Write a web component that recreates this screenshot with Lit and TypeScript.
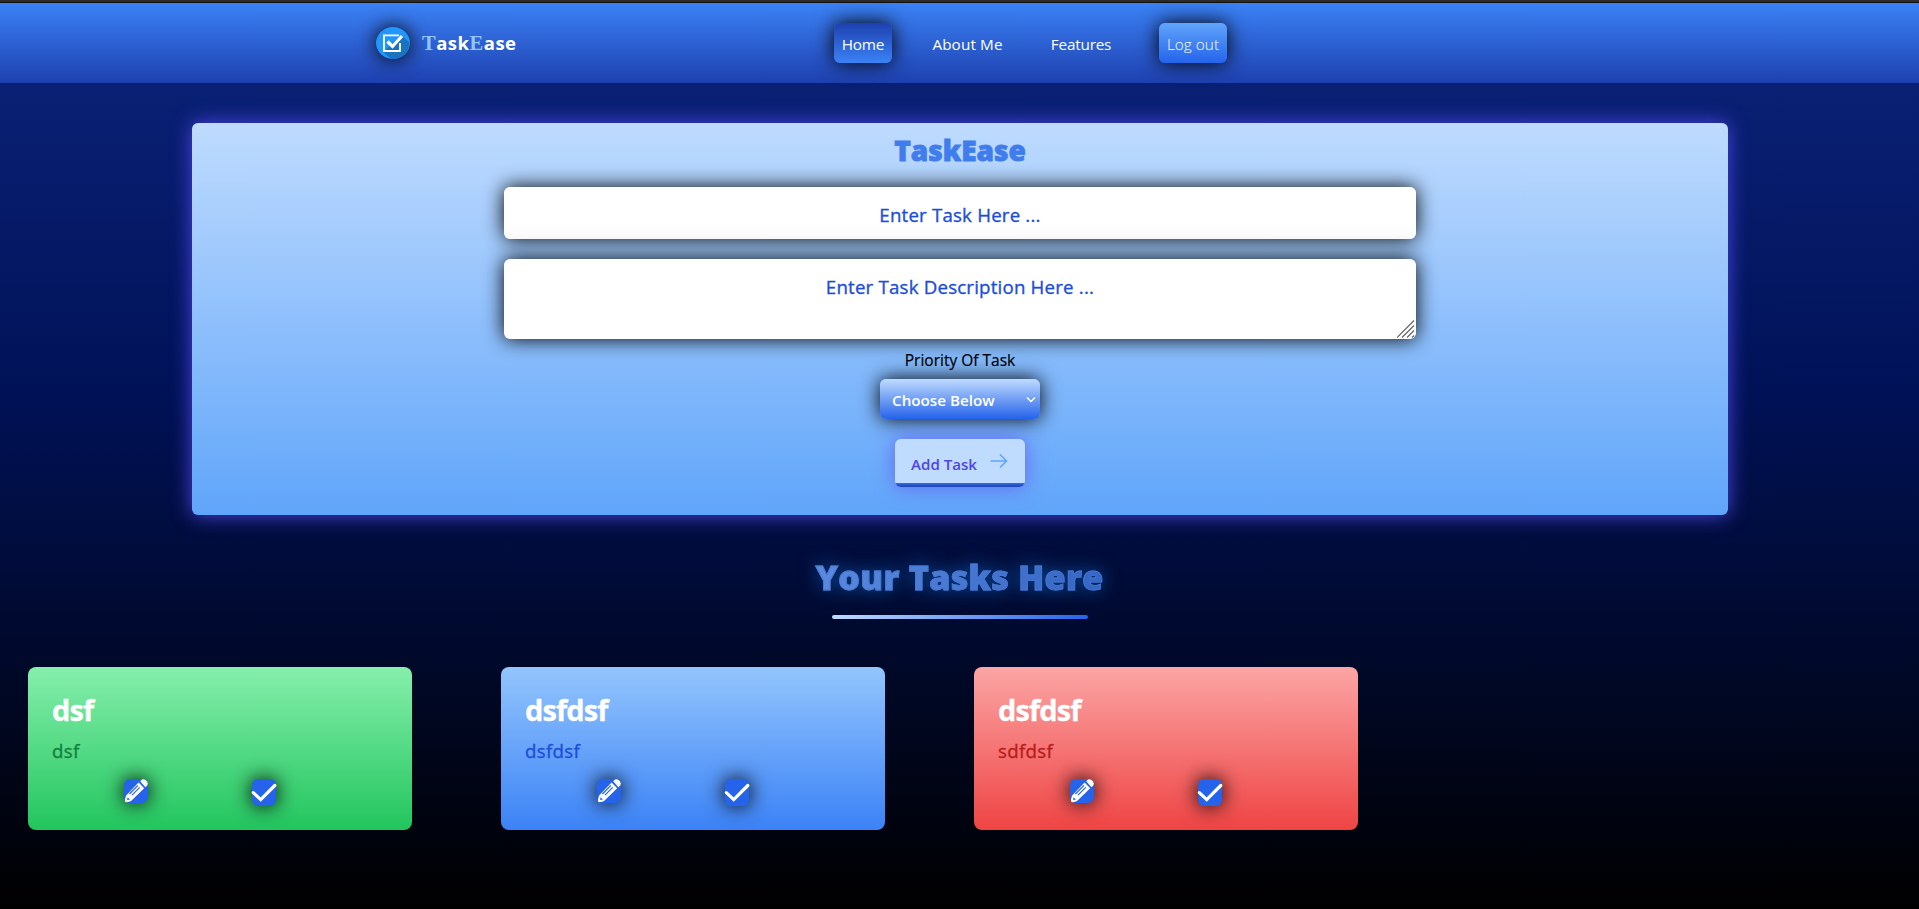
import { LitElement, html, css } from "lit";
import { customElement, property } from "lit/decorators.js";

interface Task {
  title: string;
  text: string;
  tone: "low" | "medium" | "high";
}

const TASKS: Task[] = [
  { title: "dsf", text: "dsf", tone: "low" },
  { title: "dsfdsf", text: "dsfdsf", tone: "medium" },
  { title: "dsfdsf", text: "sdfdsf", tone: "high" },
];

@customElement("task-card")
class TaskCard extends LitElement {
  @property({ attribute: false }) task!: Task;

  static styles = css`
    :host { display: block; width: 384px; height: 163px; }
    .card {
      box-sizing: border-box; height: 100%; border-radius: 8px; padding: 24px;
      display: flex; flex-direction: column;
    }
    .low { background: linear-gradient(#86efac, #22c55e); --ink: #15803d; }
    .medium { background: linear-gradient(#93c5fd, #3b82f6); --ink: #1d4ed8; }
    .high { background: linear-gradient(#fca5a5, #ef4444); --ink: #b91c1c; }
    .title {
      margin: 0; font-size: 29px; line-height: 38px; font-weight: 700;
      color: #fff; letter-spacing: -0.9px; -webkit-text-stroke: 0.3px #fff;
    }
    .text {
      margin: 8px 0 0; font-size: 18.7px; line-height: 28px; font-weight: 500;
      color: var(--ink); letter-spacing: 0.3px; -webkit-text-stroke: 0.35px var(--ink);
    }
    .actions { display: flex; gap: 104px; padding-left: 72px; margin-top: 14px; align-items: flex-start; }
    .icon { display: block; width: 24px; background: #2563eb; border-radius: 6px; box-shadow: 0 0 20px #000; color: #fff; overflow: visible; }
    .pencil { height: 24px; }
    .check { height: 27px; }
  `;

  render() {
    const t = this.task;
    return html`
      <article class="card ${t.tone}">
        <h2 class="title">${t.title}</h2>
        <p class="text">${t.text}</p>
        <div class="actions">
          <svg class="icon pencil" viewBox="0 0 24 24">
            <path fill="#fff" d="M16.2 2.2 18 .6Q19.8-.5 21.8 1.3L23 2.6Q24.6 4.6 23.2 6.5L21.4 8.2Z" />
            <path fill="#fff" d="M14.6 3.6 20.2 9.2 7.3 21.8Q6.7 22.4 5.8 22.6L2.7 23.3Q.4 23.4.9 21L1.7 17.7Q1.9 16.7 2.6 16Z" />
            <path fill="#2563eb" d="M3.6 18.2 6 20.4 3.100 20.900Z" />
            <path fill="none" stroke="#2563eb" stroke-width="1.200" d="M14 6.300 5.400 15M15.700 8.300 8 16.100" />
          </svg>
          <svg class="icon check" viewBox="0 0 24 27">
            <path fill="none" stroke="#fff" stroke-width="3.200" stroke-linecap="round" d="M1.300 13.600 8.700 20.600 22.800 6.500" />
          </svg>
        </div>
      </article>
    `;
  }
}

@customElement("app-root")
class AppRoot extends LitElement {
  static styles = css`
    :host {
      display: flex; flex-direction: column; height: 909px; box-sizing: border-box; overflow: hidden;
      font-family: "Open Sans", "Noto Sans", sans-serif;
      background: linear-gradient(#0c247c, #001258 42%, #000);
    }
    .strip { flex: none; height: 2px; background: #2b2b2b; border-bottom: 1px solid #111; }
    .nav {
      flex: none; height: 80px; box-sizing: border-box; display: flex; align-items: flex-start;
      padding: 20px 0 0 376px; background: linear-gradient(#3b82f6, #1e40af); color: #fff;
    }
    .logo { width: 34px; height: 32px; border-radius: 50%; margin-top: 4px; box-shadow: 0 0 20px #000; display: block; }
    .brand { width: 413px; margin-left: 12px; line-height: 39px; font-size: 18.5px; font-weight: 700; letter-spacing: 0.5px; white-space: nowrap; }
    .cap { font-family: "Liberation Serif", serif; font-size: 20.5px; line-height: 1; color: #93c5fd; }
    .links { display: flex; font-size: 15.3px; line-height: 42px; height: 40px; margin-left: -1px; }
    .link { box-sizing: border-box; height: 40px; text-align: center; border-radius: 6px; white-space: nowrap; }
    .home { width: 58px; letter-spacing: -0.2px; background: linear-gradient(#1e40af, #3b82f6); box-shadow: 0 0 20px #000; }
    .about { width: 87px; margin-left: 32px; letter-spacing: 0.1px; }
    .features { width: 76px; margin-left: 32px; letter-spacing: -0.2px; }
    .logout { width: 68px; margin-left: 40px; font-weight: 300; letter-spacing: 0.05px; background: linear-gradient(#60a5fa, #2563eb); box-shadow: 0 0 20px #000; }
    .panel {
      flex: none; width: 1536px; height: 392px; margin: 40px 0 0 192px; box-sizing: border-box; border-radius: 6px;
      background: linear-gradient(#bfdbfe, #60a5fa); box-shadow: 0 0 20px #4f46e5;
      display: flex; flex-direction: column; align-items: center; padding-top: 8px;
    }
    .name {
      margin: 0; height: 40px; line-height: 39px; font-size: 28px; font-weight: 900; color: #3f7ced;
      -webkit-text-stroke: 0.8px #3f7ced;
    }
    .field {
      box-sizing: border-box; width: 912px; border-radius: 6px; background: #fff; box-shadow: 0 0 20px #000;
      text-align: center; color: #1d4ed8; font-size: 18.7px; font-weight: 500; letter-spacing: 0.19px;
      -webkit-text-stroke: 0.35px #1d4ed8;
    }
    .task { height: 52px; margin-top: 16px; line-height: 55px; background: linear-gradient(#fff 70%, #fafafa); }
    .description { height: 80px; margin-top: 20px; line-height: 56px; display: flex; flex-direction: column; align-items: center; justify-content: space-between; }
    .grip { width: 18px; height: 18px; align-self: flex-end; display: block; margin: 0 1px 1px 0; }
    .label { height: 40px; line-height: 43px; font-size: 15.5px; font-weight: 500; letter-spacing: 0; color: #000; -webkit-text-stroke: 0.2px #000; }
    .select {
      box-sizing: border-box; width: 160px; height: 40px; border-radius: 6px; padding: 0 4px 0 12px;
      display: flex; align-items: center; justify-content: space-between; color: #fff;
      background: linear-gradient(#bfdbfe, #2563eb); box-shadow: 0 0 20px #000;
      font-size: 15.2px; font-weight: 600; line-height: 40px;
    }
    .choice { padding-top: 2px; }
    .chevron { width: 10px; height: 8px; display: block; margin-top: 2px; }
    .add {
      box-sizing: border-box; width: 130px; height: 48px; margin-top: 20px; border-radius: 6px; overflow: hidden;
      display: flex; align-items: flex-start; padding-left: 16px; gap: 14px; color: #4f46e5;
      background: linear-gradient(#bfdbfe 0 44px, #2f70e4 44px, #1e40af 48px);
      box-shadow: 0 0 20px #6366f1; font-size: 15.1px; font-weight: 600; line-height: 51px;
    }
    .add-text { width: 65px; white-space: nowrap; }
    .arrow { width: 18px; height: 14px; margin-top: 15px; display: block; }
    .heading {
      flex: none; align-self: center; margin: 37px 0 0; height: 48px; line-height: 50px; font-size: 34px; font-weight: 900;
      letter-spacing: 0.3px; color: transparent; background: linear-gradient(100deg, #5b8adf, #3565c5); -webkit-background-clip: text; background-clip: text;
      -webkit-text-stroke: 0.8px #4677d3; filter: drop-shadow(0 0 9px #0b4c9c); white-space: nowrap;
    }
    .rule { flex: none; align-self: center; width: 256px; height: 4px; margin-top: 15px; border-radius: 3px; background: linear-gradient(90deg, #bfdbfe, #2563eb); }
    .cards { display: flex; gap: 89px; padding: 48px 0 0 28px; }
  `;

  render() {
    return html`
      <div class="strip"></div>
      <nav class="nav">
        <svg class="logo" viewBox="0 0 34 32">
          <ellipse cx="17" cy="16" rx="17" ry="16" fill="#2196fb" />
          <path fill="#1b72bd" d="M25 8 33.500 15.500A17 16 0 0 1 15 32L7.500 25Z" />
          <path fill="none" stroke="#fff" stroke-width="1.800" d="M23 8.300H8V24H24V16" />
          <path fill="none" stroke="#fff" stroke-width="3.200" d="M11.500 14.500 16.500 19.500 26 9" />
        </svg>
        <div class="brand"><span class="cap">T</span>ask<span class="cap">E</span>ase</div>
        <div class="links">
          <span class="link home">Home</span>
          <span class="link about">About Me</span>
          <span class="link features">Features</span>
          <span class="link logout">Log out</span>
        </div>
      </nav>
      <main class="panel">
        <h1 class="name">TaskEase</h1>
        <div class="field task">Enter Task Here ...</div>
        <div class="field description">
          <span>Enter Task Description Here ...</span>
          <svg class="grip" viewBox="0 0 18 18"><path fill="none" stroke="#666" stroke-width="1.200" d="M0 17.500 17 .5M5 17.500 17 5.500M10 17.500 17 10.500M15 17.500 17 15.500" /></svg>
        </div>
        <div class="label">Priority Of Task</div>
        <div class="select">
          <span class="choice">Choose Below</span>
          <svg class="chevron" viewBox="0 0 10 8"><path fill="none" stroke="#fff" stroke-width="1.500" d="M1 1.500 5 5.500 9 1.500" /></svg>
        </div>
        <div class="add">
          <span class="add-text">Add Task</span>
          <svg class="arrow" viewBox="0 0 18 14"><path fill="none" stroke="#60a5fa" stroke-width="1.500" d="M.5 7H16.500M10 .5 16.500 7 10 13.500" /></svg>
        </div>
      </main>
      <h2 class="heading">Your Tasks Here</h2>
      <div class="rule"></div>
      <section class="cards">${TASKS.map((t) => html`<task-card .task=${t}></task-card>`)}</section>
    `;
  }
}
